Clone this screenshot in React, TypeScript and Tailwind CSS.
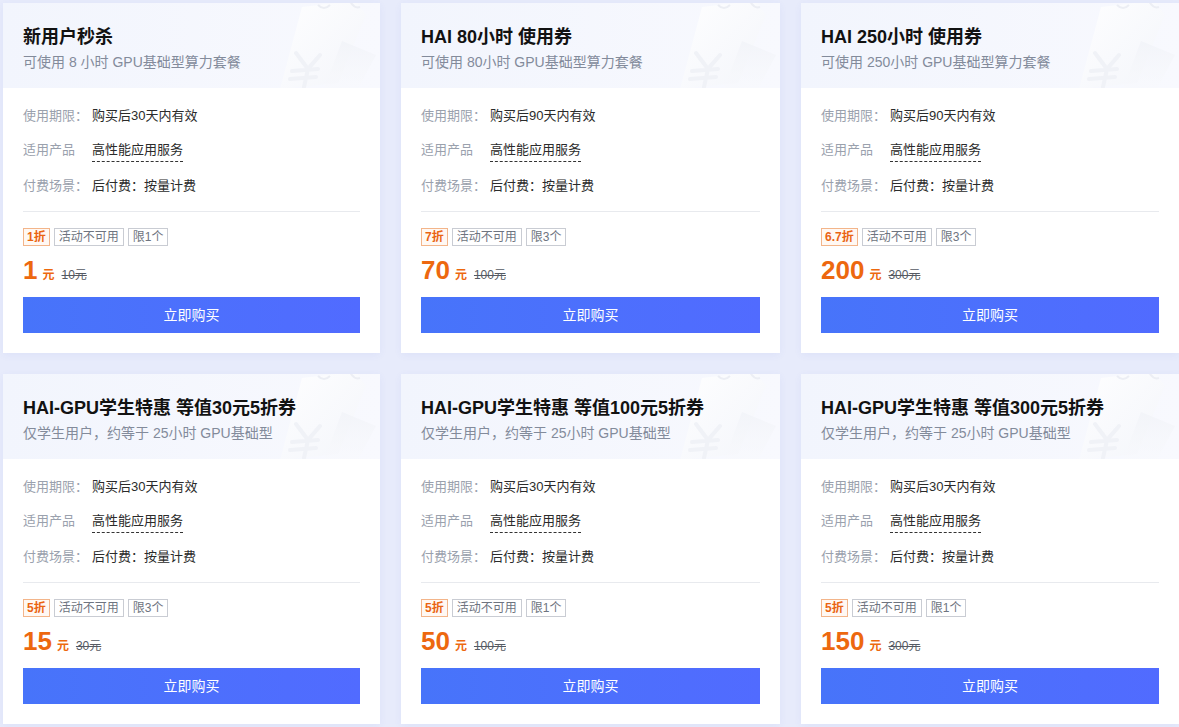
import React from "react";

type Item = {
  title: string;
  sub: string;
  days: string;
  discount: string;
  limit: string;
  price: string;
  orig: string;
};

const items: Item[] = [
  { title: "新用户秒杀", sub: "可使用 8 小时 GPU基础型算力套餐", days: "购买后30天内有效", discount: "1折", limit: "限1个", price: "1", orig: "10元" },
  { title: "HAI 80小时 使用券", sub: "可使用 80小时 GPU基础型算力套餐", days: "购买后90天内有效", discount: "7折", limit: "限3个", price: "70", orig: "100元" },
  { title: "HAI 250小时 使用券", sub: "可使用 250小时 GPU基础型算力套餐", days: "购买后90天内有效", discount: "6.7折", limit: "限3个", price: "200", orig: "300元" },
  { title: "HAI-GPU学生特惠 等值30元5折券", sub: "仅学生用户，约等于 25小时 GPU基础型", days: "购买后30天内有效", discount: "5折", limit: "限3个", price: "15", orig: "30元" },
  { title: "HAI-GPU学生特惠 等值100元5折券", sub: "仅学生用户，约等于 25小时 GPU基础型", days: "购买后30天内有效", discount: "5折", limit: "限1个", price: "50", orig: "100元" },
  { title: "HAI-GPU学生特惠 等值300元5折券", sub: "仅学生用户，约等于 25小时 GPU基础型", days: "购买后30天内有效", discount: "5折", limit: "限1个", price: "150", orig: "300元" },
];

function Deco() {
  return (
    <svg
      className="absolute right-0 top-0 pointer-events-none"
      width="140"
      height="85"
      viewBox="0 0 140 85"
    >
      <defs>
        <linearGradient id="dg" x1="0" y1="0" x2="1" y2="1">
          <stop offset="0" stopColor="#ffffff" stopOpacity="0.9" />
          <stop offset="1" stopColor="#f3f5fa" stopOpacity="0.8" />
        </linearGradient>
        <linearGradient id="dg2" x1="0" y1="0" x2="0" y2="1">
          <stop offset="0" stopColor="#f1f3f8" stopOpacity="0.8" />
          <stop offset="1" stopColor="#f8f9fc" stopOpacity="0.4" />
        </linearGradient>
      </defs>
      <path d="M62 4 L112 -2 Q118 -2 120 4 L126 12 L98 80 L40 86 Z" fill="url(#dg)" />
      <path d="M110 -2 Q114 6 120 4" stroke="#eceef4" strokeWidth="2" fill="none" />
      <path d="M78 2 Q84 8 90 2" stroke="#eceef4" strokeWidth="2" fill="none" />
      <path d="M102 38 L136 52 L118 86 L84 86 Z" fill="url(#dg2)" />
      <path
        d="M56 50 L68 66 M80 52 L68 66 L64 84 M52 68 L78 66 M50 76 L76 74"
        stroke="#f0f2f7"
        strokeWidth="4"
        fill="none"
        strokeLinecap="round"
      />
    </svg>
  );
}

function Card({ it }: { it: Item }) {
  return (
    <div className="bg-white shadow-[0_2px_8px_rgba(60,90,200,0.06)] flex flex-col">
      <div className="relative h-[85px] bg-gradient-to-r from-[#f2f5fd] to-[#f8f9fe] px-5 pt-[22px] overflow-hidden">
        <Deco />
        <div className="relative text-[18px] leading-[24px] font-bold text-[#121212]">{it.title}</div>
        <div className="relative mt-[3px] text-[14px] leading-[20px] text-[#838b9b]">{it.sub}</div>
      </div>
      <div className="px-5 pt-[18px] pb-5 flex flex-col">
        <div className="flex flex-col gap-[14px] text-[13px] leading-[20px]">
          <div className="flex">
            <span className="w-[69px] text-[#9aa1ad]">使用期限：</span>
            <span className="text-[#2b2b2b]">{it.days}</span>
          </div>
          <div className="flex">
            <span className="w-[69px] text-[#9aa1ad]">适用产品</span>
            <span className="text-[#2b2b2b] border-b border-dashed border-[#333] leading-[19px] h-[22px]">高性能应用服务</span>
          </div>
          <div className="flex">
            <span className="w-[69px] text-[#9aa1ad]">付费场景：</span>
            <span className="text-[#2b2b2b]">后付费：按量计费</span>
          </div>
        </div>
        <div className="mt-[15px] h-px bg-[#e8eaee]" />
        <div className="mt-[16px] flex gap-[4px] text-[12px] leading-[16px]">
          <span className="border border-[#f3b58a] bg-[#fff8f3] text-[#ea6412] font-bold px-[3px]">{it.discount}</span>
          <span className="border border-[#c9ccd3] text-[#6e7480] px-[4px]">活动不可用</span>
          <span className="border border-[#c9ccd3] text-[#6e7480] px-[4px]">{it.limit}</span>
        </div>
        <div className="mt-[9px] h-[30px] flex items-end pb-[1px]">
          <span className="text-[26px] leading-[28px] font-bold text-[#ed680f]">{it.price}</span>
          <span className="ml-[5px] text-[12px] leading-[18px] font-bold text-[#ed680f]">元</span>
          <span className="ml-[7px] text-[12px] leading-[18px] text-[#555a63] line-through">{it.orig}</span>
        </div>
        <button className="mt-[12px] h-[36px] w-full bg-gradient-to-r from-[#4774fa] to-[#516bff] text-white text-[14px]">
          立即购买
        </button>
      </div>
    </div>
  );
}

export default function App() {
  return (
    <div
      className="w-[1179px] h-[727px] bg-[#e7ebfb] pl-[3px] pt-[3px] overflow-hidden"
      style={{ fontFamily: '"Liberation Sans", "Noto Sans CJK SC", sans-serif' }}
    >
      <div className="grid grid-cols-[377px_379px_378px] gap-x-[21px] gap-y-[21px]">
        {items.map((it, i) => (
          <Card key={i} it={it} />
        ))}
      </div>
    </div>
  );
}
